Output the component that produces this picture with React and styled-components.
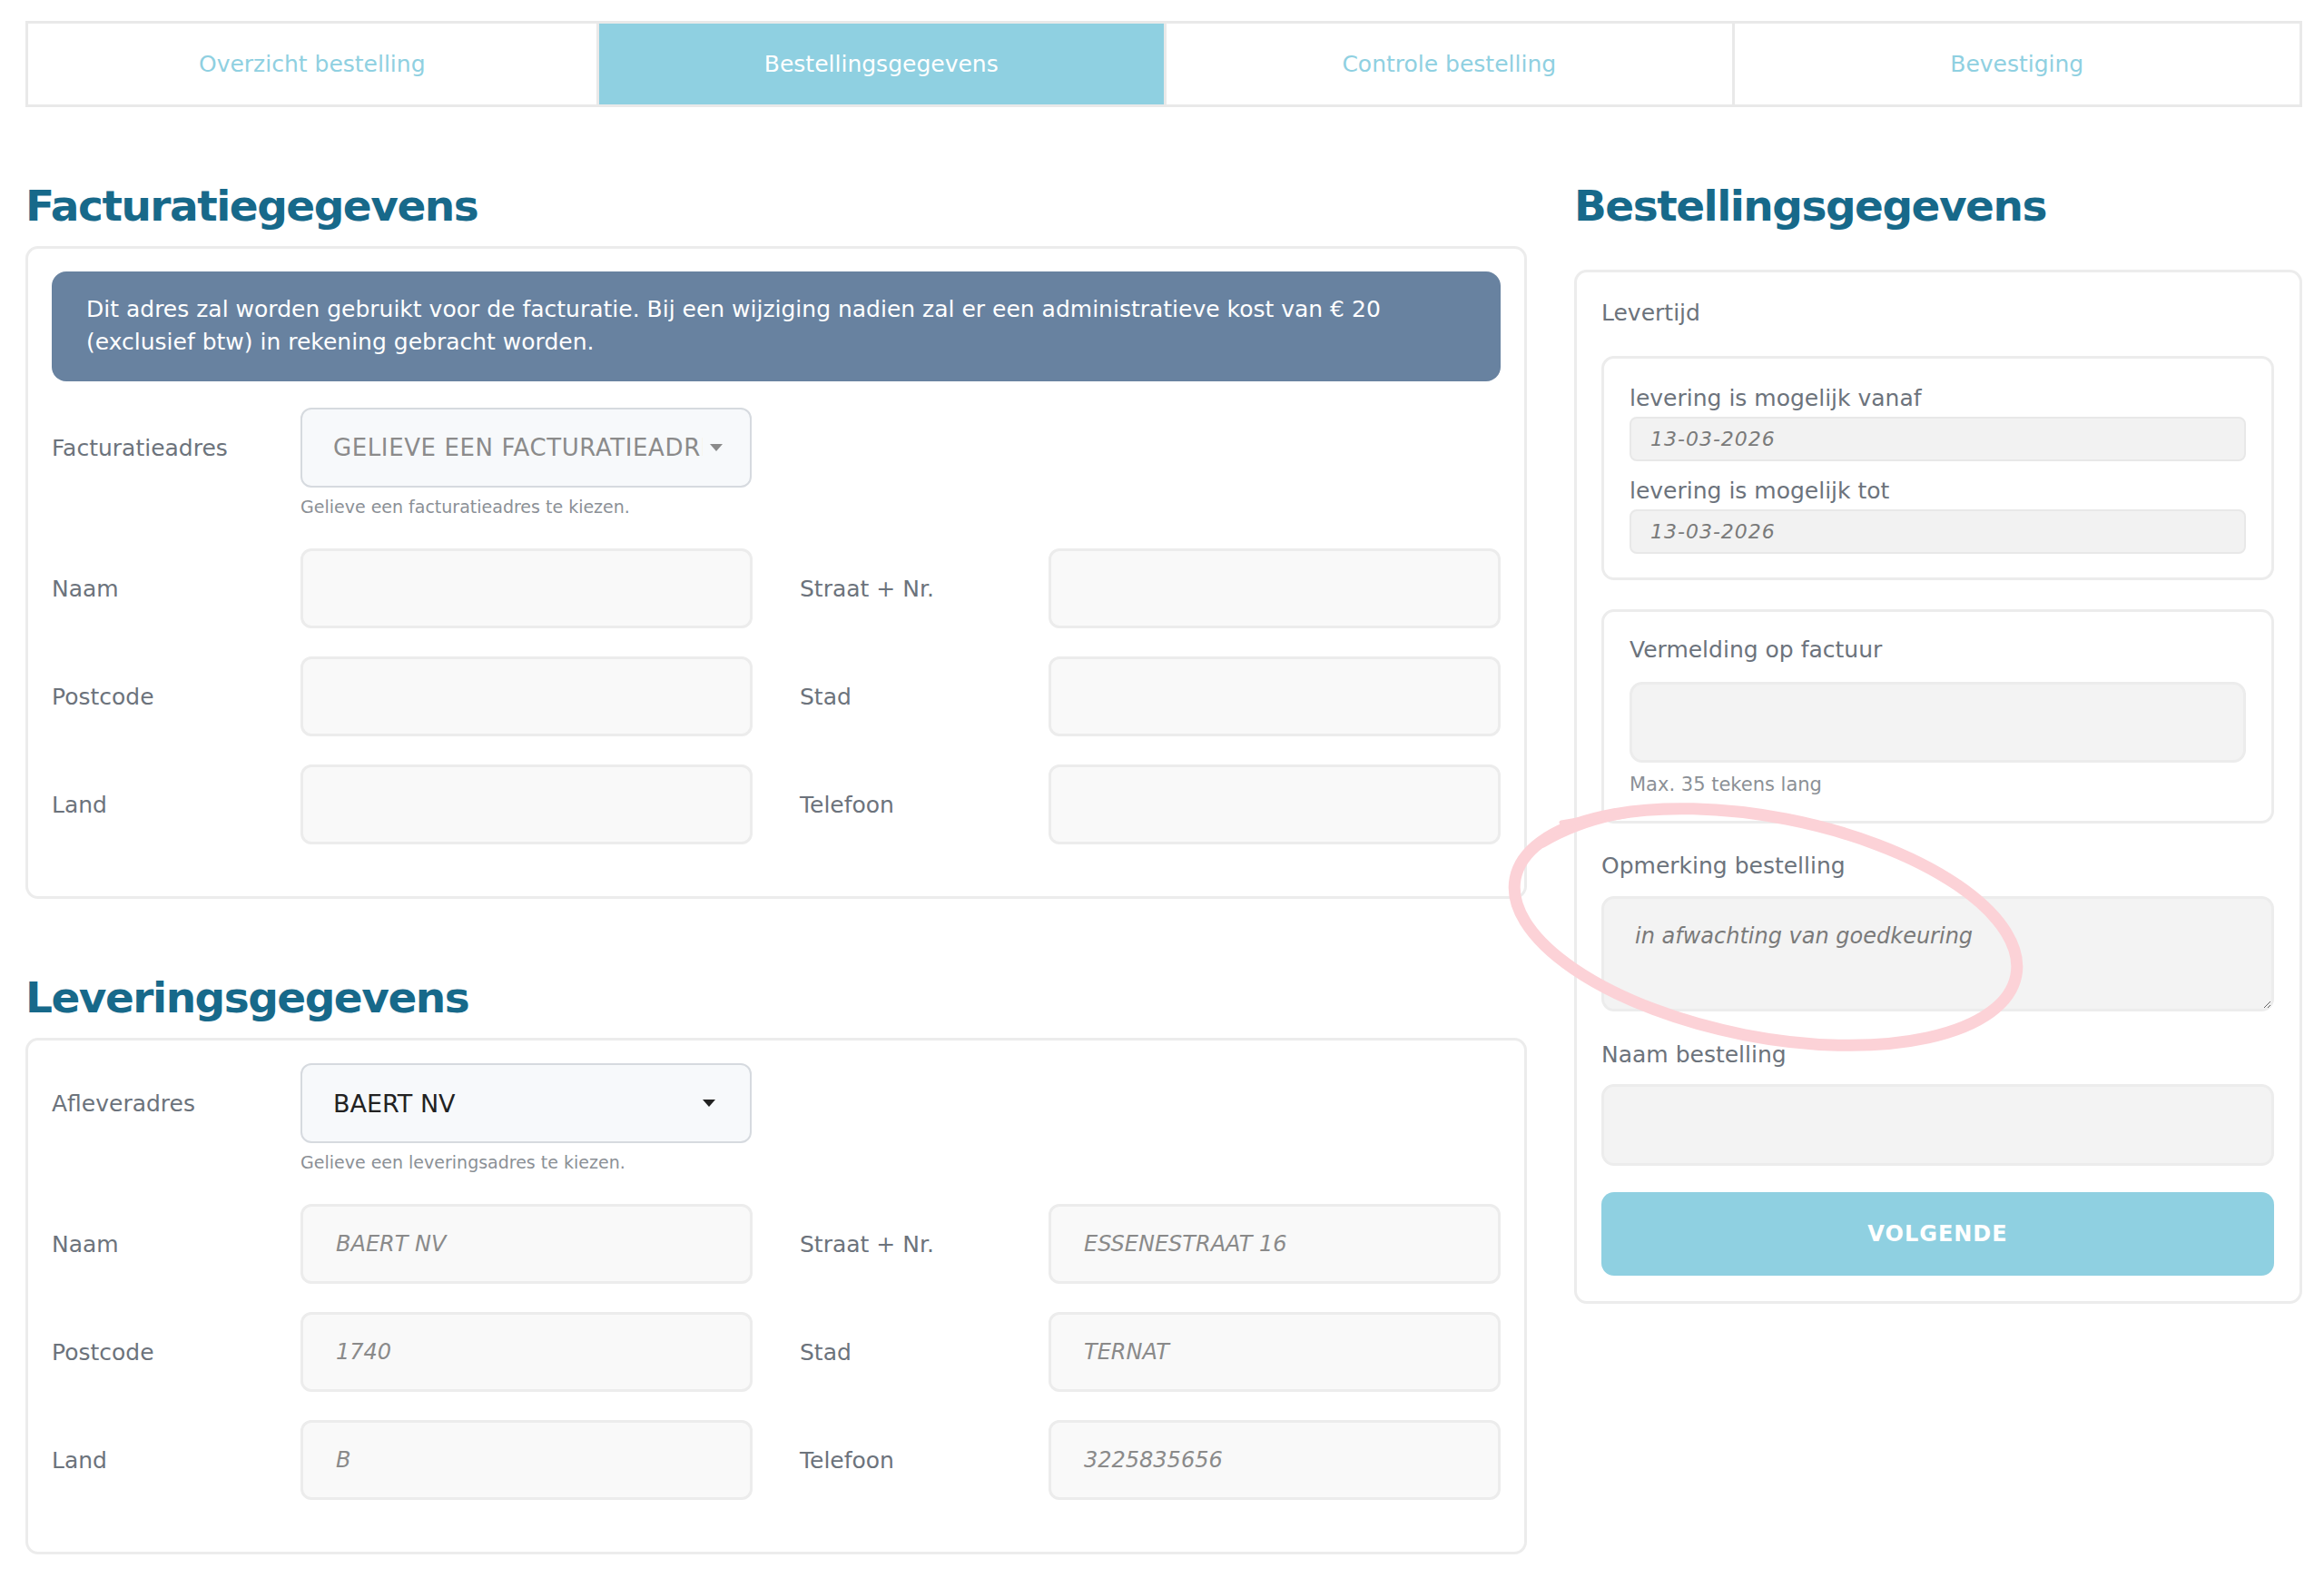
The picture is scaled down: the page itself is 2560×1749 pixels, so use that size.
import React from 'react';
import styled, { createGlobalStyle } from 'styled-components';

const GlobalStyle = createGlobalStyle`
  body {
    margin: 0;
    background: #ffffff;
    font-family: 'DejaVu Sans', 'Open Sans', sans-serif;
    color: #6c737c;
  }
  * { box-sizing: border-box; }
`;

const Page = styled.div`
  position: relative;
  padding: 23px 24px 40px 28px;
`;

const Steps = styled.nav`
  display: grid;
  grid-template-columns: repeat(4, 1fr);
  height: 95px;
  border: 3px solid #e9e9e9;
`;

const Step = styled.div`
  display: flex;
  align-items: center;
  justify-content: center;
  font-size: 25px;
  color: ${p => (p.$active ? '#ffffff' : '#8fd0e1')};
  background: ${p => (p.$active ? '#8fd0e1' : '#ffffff')};
  & + & { border-left: 3px solid #e9e9e9; }
`;

const Columns = styled.div`
  display: grid;
  grid-template-columns: minmax(0, 1654fr) minmax(0, 802fr);
  column-gap: 52px;
  align-items: start;
`;

const SectionTitle = styled.h2`
  margin: 79px 0 14px;
  font-size: 47px;
  line-height: 60px;
  letter-spacing: -1.5px;
  font-weight: 700;
  color: #17698a;
`;

const Card = styled.section`
  border: 3px solid #ececec;
  border-radius: 14px;
  padding: 25px 26px 57px;
`;

const Notice = styled.div`
  background: #6882a0;
  color: #ffffff;
  border-radius: 16px;
  padding: 24px 38px 25px;
  font-size: 25px;
  line-height: 36px;
  margin-bottom: 29px;
`;

const SelectRow = styled.div`
  display: flex;
  align-items: center;
  margin-top: ${p => p.$top || 0}px;
`;

const Label = styled.div`
  flex: 0 0 274px;
  font-size: 25px;
  color: #6c737c;
`;

const Select = styled.div`
  width: 497px;
  height: 88px;
  display: flex;
  align-items: center;
  gap: 8px;
  padding: 0 30px 0 34px;
  border: 2px solid #d6dadf;
  border-radius: 12px;
  background: #f7f9fb;
  font-size: ${p => (p.$placeholder ? 26 : 27)}px;
  color: ${p => (p.$placeholder ? '#8b8b8b' : '#222222')};
  letter-spacing: ${p => (p.$placeholder ? '0.6px' : '0')};
  text-transform: uppercase;
`;

const SelectText = styled.span`
  flex: 1;
  overflow: hidden;
  white-space: nowrap;
  text-overflow: clip;
`;

const Caret = styled.span`
  flex: 0 0 auto;
  width: 0;
  height: 0;
  border-left: 7px solid transparent;
  border-right: 7px solid transparent;
  border-top: 8px solid ${p => (p.$muted ? '#8b8b8b' : '#222222')};
  margin-right: ${p => (p.$muted ? 0 : 8)}px;
`;

const Help = styled.div`
  margin: 10px 0 0 274px;
  font-size: 19px;
  color: #8b9096;
`;

const FieldGrid = styled.div`
  display: grid;
  grid-template-columns: 1fr 1fr;
  column-gap: 52px;
  row-gap: 31px;
  margin-top: 35px;
`;

const Field = styled.div`
  display: flex;
  align-items: center;
`;

const TextBox = styled.div`
  flex: 1;
  height: 88px;
  display: flex;
  align-items: center;
  padding: 0 36px;
  border: 3px solid #ececec;
  border-radius: 12px;
  background: #f9f9f9;
  font-size: 24px;
  font-style: italic;
  color: #8a8a8a;
`;

const Aside = styled.aside`
  margin-top: 40px;
  border: 3px solid #ececec;
  border-radius: 14px;
  padding: 30px 28px 28px 27px;
  display: flex;
  flex-direction: column;
`;

const SideLabel = styled.div`
  font-size: 25px;
  line-height: 30px;
  color: #6c737c;
  margin-top: ${p => p.$top || 0}px;
  margin-bottom: ${p => p.$bottom || 0}px;
`;

const SubCard = styled.div`
  border: 3px solid #ececec;
  border-radius: 14px;
  padding: ${p => p.$pad};
  margin-top: ${p => p.$top || 0}px;
`;

const DateBox = styled.div`
  height: 49px;
  display: flex;
  align-items: center;
  padding: 0 21px;
  background: #f2f2f2;
  border: 2px solid #e8e8e8;
  border-radius: 8px;
  font-size: 22px;
  font-style: italic;
  letter-spacing: 1px;
  color: #7a7a7a;
  margin-bottom: ${p => p.$bottom || 0}px;
`;

const GreyBox = styled.div`
  height: ${p => p.$h || 89}px;
  background: #f3f3f3;
  border: 3px solid #ececec;
  border-radius: 14px;
`;

const Hint = styled.div`
  margin-top: 12px;
  font-size: 21px;
  color: #8b9096;
`;

const Remark = styled.textarea`
  display: block;
  width: 100%;
  height: 127px;
  padding: 27px 34px;
  background: #f3f3f3;
  border: 3px solid #ececec;
  border-radius: 14px;
  font-family: inherit;
  font-size: 24px;
  font-style: italic;
  color: #7a7a7a;
  resize: vertical;
  outline: none;
`;

const NextButton = styled.button`
  margin-top: 29px;
  height: 92px;
  width: 100%;
  border: none;
  border-radius: 14px;
  background: #8fd0e1;
  color: #ffffff;
  font-family: inherit;
  font-size: 24px;
  font-weight: 700;
  letter-spacing: 1px;
  cursor: pointer;
`;

const Scribble = styled.svg`
  position: absolute;
  left: 1640px;
  top: 870px;
  pointer-events: none;
`;

const billing = [
  ['Naam', '', 'Straat + Nr.', ''],
  ['Postcode', '', 'Stad', ''],
  ['Land', '', 'Telefoon', ''],
];

const delivery = [
  ['Naam', 'BAERT NV', 'Straat + Nr.', 'ESSENESTRAAT 16'],
  ['Postcode', '1740', 'Stad', 'TERNAT'],
  ['Land', 'B', 'Telefoon', '3225835656'],
];

const AddressFields = ({ rows }) => (
  <FieldGrid>
    {rows.map(([l1, v1, l2, v2]) => (
      <React.Fragment key={l1}>
        <Field>
          <Label>{l1}</Label>
          <TextBox>{v1}</TextBox>
        </Field>
        <Field>
          <Label>{l2}</Label>
          <TextBox>{v2}</TextBox>
        </Field>
      </React.Fragment>
    ))}
  </FieldGrid>
);

export default function App() {
  return (
    <Page>
      <GlobalStyle />
      <Steps>
        <Step>Overzicht bestelling</Step>
        <Step $active>Bestellingsgegevens</Step>
        <Step>Controle bestelling</Step>
        <Step>Bevestiging</Step>
      </Steps>

      <Columns>
        <div>
          <SectionTitle>Facturatiegegevens</SectionTitle>
          <Card>
            <Notice>
              Dit adres zal worden gebruikt voor de facturatie. Bij een wijziging nadien zal er een administratieve kost van € 20
              <br />
              (exclusief btw) in rekening gebracht worden.
            </Notice>
            <SelectRow>
              <Label>Facturatieadres</Label>
              <Select $placeholder>
                <SelectText>Gelieve een facturatieadres te kiezen</SelectText>
                <Caret $muted />
              </Select>
            </SelectRow>
            <Help>Gelieve een facturatieadres te kiezen.</Help>
            <AddressFields rows={billing} />
          </Card>

          <SectionTitle>Leveringsgegevens</SectionTitle>
          <Card>
            <SelectRow>
              <Label>Afleveradres</Label>
              <Select>
                <SelectText>BAERT NV</SelectText>
                <Caret />
              </Select>
            </SelectRow>
            <Help>Gelieve een leveringsadres te kiezen.</Help>
            <AddressFields rows={delivery} />
          </Card>
        </div>

        <div>
          <SectionTitle>Bestellingsgegevens</SectionTitle>
          <Aside>
            <SideLabel $bottom={32}>Levertijd</SideLabel>
            <SubCard $pad="29px 28px 26px">
              <SideLabel $bottom={5}>levering is mogelijk vanaf</SideLabel>
              <DateBox $bottom={18}>13-03-2026</DateBox>
              <SideLabel $bottom={5}>levering is mogelijk tot</SideLabel>
              <DateBox>13-03-2026</DateBox>
            </SubCard>
            <SubCard $pad="27px 28px 28px" $top={32}>
              <SideLabel $bottom={20}>Vermelding op factuur</SideLabel>
              <GreyBox />
              <Hint>Max. 35 tekens lang</Hint>
            </SubCard>
            <SideLabel $top={32} $bottom={18}>Opmerking bestelling</SideLabel>
            <Remark defaultValue="in afwachting van goedkeuring" />
            <SideLabel $top={33} $bottom={17}>Naam bestelling</SideLabel>
            <GreyBox $h={90} />
            <NextButton>VOLGENDE</NextButton>
          </Aside>
        </div>
      </Columns>

      <Scribble width="620" height="310" viewBox="0 0 620 310">
        <g fill="none" stroke="#fcd2d7" strokeLinecap="round">
          <ellipse cx="305" cy="151" rx="281" ry="121" transform="rotate(11 305 151)" strokeWidth="13" />
          <path d="M60 60 C 110 30, 170 22, 215 22" strokeWidth="7" />
          <path d="M80 36 C 120 28, 160 24, 200 24" strokeWidth="5" />
        </g>
      </Scribble>
    </Page>
  );
}
